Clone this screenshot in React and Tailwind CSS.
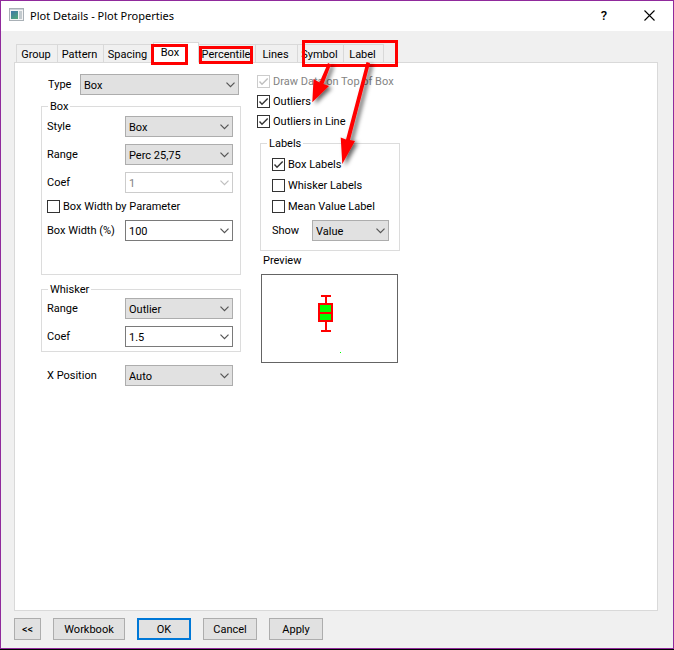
import { useId } from "react";

const TABS = [
  { name: "Group", width: "w-[42px]" },
  { name: "Pattern", width: "w-[47px]" },
  { name: "Spacing", width: "w-[51px]" },
  { name: "Box", width: "w-[46px]", selected: true },
  { name: "Percentile", width: "w-[58px]" },
  { name: "Lines", width: "w-[43px]" },
  { name: "Symbol", width: "w-[47px]" },
  { name: "Label", width: "w-[41px]" },
];

function Tab({ name, width, selected }) {
  const look = selected
    ? "z-10 h-[21px] bg-white pr-3 border-b-white"
    : "h-[19px] bg-[#f0f0f0] pt-[2px] pr-[2px] border-b-[#d9d9d9]";
  return (
    <button
      role="tab"
      aria-selected={!!selected}
      className={`-mr-px shrink-0 border border-[#d9d9d9] text-center leading-4 whitespace-nowrap ${width} ${look}`}
    >
      {name}
    </button>
  );
}

const SELECT_LOOKS = {
  list: "border-[#adadad] bg-[#e1e1e1] text-black",
  edit: "border-[#7a7a7a] bg-white text-black",
  disabled: "border-[#cccccc] bg-white text-[#838383]",
};

function Select({ id, value, look = "list", className }) {
  return (
    <span className={`relative block h-[21px] ${className}`}>
      <select
        id={id}
        defaultValue={value}
        disabled={look === "disabled"}
        className={`h-full w-full appearance-none border pt-[2px] pr-5 pl-[3px] leading-4 opacity-100 ${SELECT_LOOKS[look]}`}
      >
        <option>{value}</option>
      </select>
      <svg
        viewBox="0 0 9 6"
        className="pointer-events-none absolute top-2 right-1 h-[6px] w-[9px]"
        fill="none"
        stroke={look === "disabled" ? "#bfbfbf" : "#555555"}
        strokeWidth="1.2"
      >
        <path d="M.5 .7 4.5 4.7 8.5 .7" />
      </svg>
    </span>
  );
}

function Field({ label, value, look }) {
  const id = useId();
  return (
    <div className="flex items-center justify-between">
      <label htmlFor={id}>{label}</label>
      <Select id={id} value={value} look={look} className="w-[108px]" />
    </div>
  );
}

function Check({ label, checked, disabled }) {
  return (
    <label
      className={`flex h-[13px] items-center gap-[3px] whitespace-nowrap ${disabled ? "text-[#838383]" : ""}`}
    >
      <span className="relative block size-[13px] shrink-0">
        <input
          type="checkbox"
          defaultChecked={checked}
          disabled={disabled}
          className="peer block size-[13px] appearance-none border border-[#333333] bg-white disabled:border-[#cccccc]"
        />
        <svg
          viewBox="0 0 13 13"
          className="pointer-events-none absolute inset-0 hidden peer-checked:block"
          fill="none"
          stroke={disabled ? "#bfbfbf" : "#333333"}
          strokeWidth="1.4"
        >
          <path d="M2.5 6.5 5 9.2 10.7 3.4" />
        </svg>
      </span>
      {label}
    </label>
  );
}

function Group({ title, className, children }) {
  return (
    <fieldset className={`border border-[#dcdcdc] ${className}`}>
      <legend className="ml-[6px] px-[2px] pt-[2px] leading-3">{title}</legend>
      {children}
    </fieldset>
  );
}

function Preview() {
  return (
    <svg
      role="img"
      aria-label="Box plot preview"
      viewBox="0 0 135 87"
      className="block h-[89px] w-[137px] border border-[#646464] bg-white"
      shapeRendering="crispEdges"
    >
      <rect x="59" y="20" width="10" height="2" fill="#f00" />
      <rect x="63" y="21" width="2" height="35" fill="#f00" />
      <rect x="59" y="55" width="10" height="2" fill="#f00" />
      <rect x="56" y="28" width="15" height="19" fill="#f00" />
      <rect x="58" y="30" width="11" height="7" fill="#0f0" />
      <rect x="58" y="39" width="11" height="6" fill="#0f0" />
      <rect x="78" y="77" width="1" height="1" fill="#0f0" />
    </svg>
  );
}

function Annotations() {
  return (
    <svg
      aria-hidden="true"
      width="420"
      height="190"
      viewBox="0 0 420 190"
      className="pointer-events-none absolute -top-px -left-px z-20"
    >
      <defs>
        <filter id="shade" x="-50%" y="-20%" width="220%" height="150%">
          <feDropShadow dx="3" dy="2" stdDeviation="2" floodColor="#000" floodOpacity="0.6" />
        </filter>
      </defs>
      <g fill="none" stroke="#f00" strokeWidth="3">
        <rect x="152.5" y="45.5" width="34" height="18" />
        <rect x="200.5" y="47.5" width="51" height="15" />
        <rect x="303.5" y="41.5" width="93" height="24" />
      </g>
      <g filter="url(#shade)" fill="#f00">
        <path d="M328 63 331 64.500 323.500 84 329 86 312.300 102.300 313.500 79 319.500 82.500Z" />
        <path d="M366.500 62 370 63 350 140 355 141 342.300 164 340.700 137.500 346 139.500Z" />
      </g>
    </svg>
  );
}

function DialogButton({ className, children }) {
  return (
    <button className={`h-[22px] bg-[#e1e1e1] pt-[2px] text-center ${className}`}>
      {children}
    </button>
  );
}

export default function App() {
  return (
    <div className="flex min-h-screen flex-col bg-black pb-px font-[Roboto,sans-serif] text-[11px] leading-4 text-black">
      <div className="relative flex flex-1 flex-col border border-[#902a9c] bg-[#f0f0f0]">
        <header className="flex h-[30px] items-center bg-white pr-[18px] pl-2">
          <svg viewBox="0 0 15 13" className="mb-[3px] h-[13px] w-[15px]">
            <defs>
              <linearGradient id="pane" x1="0" y1="0" x2="0.6" y2="1">
                <stop offset="0" stopColor="#3f76a8" />
                <stop offset="1" stopColor="#4fa27c" />
              </linearGradient>
            </defs>
            <rect x=".5" y=".5" width="14" height="12" fill="#f4f4f4" stroke="#a9b0b6" />
            <rect x="1" y="1" width="13" height="1" fill="#cdd3d8" />
            <rect x="2" y="3" width="7" height="8" fill="url(#pane)" />
            <rect x="10" y="3" width="3" height="8" fill="#c3cace" />
          </svg>
          <h1 className="ml-[6px] flex-1 font-['Noto_Sans',sans-serif] text-[11px]">
            Plot Details - Plot Properties
          </h1>
          <button aria-label="Help" className="mr-[34px] mb-px w-3 text-[13px] font-medium">
            ?
          </button>
          <button aria-label="Close" className="mb-[2px]">
            <svg viewBox="0 0 11 11" className="size-[11px]" stroke="#000" strokeWidth="1.1">
              <path d="M.5 .5 10.500 10.500M10.500 .5 .5 10.500" />
            </svg>
          </button>
        </header>

        <main className="flex flex-1 flex-col px-[13px] pt-[11px]">
          <div role="tablist" className="-mb-px flex h-[21px] items-end pl-[2px]">
            {TABS.map((tab) => (
              <Tab key={tab.name} {...tab} />
            ))}
          </div>

          <section className="mr-[2px] flex flex-1 items-start gap-4 border border-[#d9d9d9] bg-white pl-[26px]">
            <div className="w-[200px] pt-[11px]">
              <div className="flex items-center justify-between pr-[2px] pl-[7px]">
                <label htmlFor="type">Type</label>
                <Select id="type" value="Box" className="w-[159px]" />
              </div>

              <Group title="Box" className="mt-1">
                <div className="flex flex-col gap-[7px] pt-[3px] pr-[7px] pb-[33px] pl-[5px]">
                  <Field label="Style" value="Box" />
                  <Field label="Range" value="Perc 25,75" />
                  <Field label="Coef" value="1" look="disabled" />
                  <Check label="Box Width by Parameter" />
                  <Field label="Box Width (%)" value="100" look="edit" />
                </div>
              </Group>

              <Group title="Whisker" className="mt-[7px]">
                <div className="flex flex-col gap-[7px] pt-[2px] pr-[7px] pb-1 pl-[5px]">
                  <Field label="Range" value="Outlier" />
                  <Field label="Coef" value="1.5" look="edit" />
                </div>
              </Group>

              <div className="mt-[13px] pr-2 pl-[6px]">
                <Field label="X Position" value="Auto" />
              </div>
            </div>

            <div className="pt-3">
              <div className="flex flex-col gap-[7px]">
                <Check label="Draw Data on Top of Box" checked disabled />
                <Check label="Outliers" checked />
                <Check label="Outliers in Line" checked />
              </div>

              <Group title="Labels" className="mt-2 ml-[3px] w-[140px]">
                <div className="pt-2 pr-[10px] pb-[9px] pl-[11px]">
                  <div className="flex flex-col gap-2">
                    <Check label="Box Labels" checked />
                    <Check label="Whisker Labels" />
                    <Check label="Mean Value Label" />
                  </div>
                  <div className="mt-[7px] flex items-center justify-between">
                    <label htmlFor="show">Show</label>
                    <Select id="show" value="Value" className="w-[77px]" />
                  </div>
                </div>
              </Group>

              <div className="mt-[2px] ml-1">
                <h2 className="mb-[5px] pl-[2px]">Preview</h2>
                <Preview />
              </div>
            </div>
          </section>

          <footer className="flex gap-3 pt-[7px] pb-2">
            <DialogButton className="w-[27px] border border-[#adadad]">&lt;&lt;</DialogButton>
            <DialogButton className="w-[72px] border border-[#adadad]">Workbook</DialogButton>
            <DialogButton className="w-[54px] border-2 border-[#0078d7]">OK</DialogButton>
            <DialogButton className="w-[54px] border border-[#adadad]">Cancel</DialogButton>
            <DialogButton className="w-[54px] border border-[#adadad]">Apply</DialogButton>
          </footer>
        </main>
        <Annotations />
      </div>
    </div>
  );
}
